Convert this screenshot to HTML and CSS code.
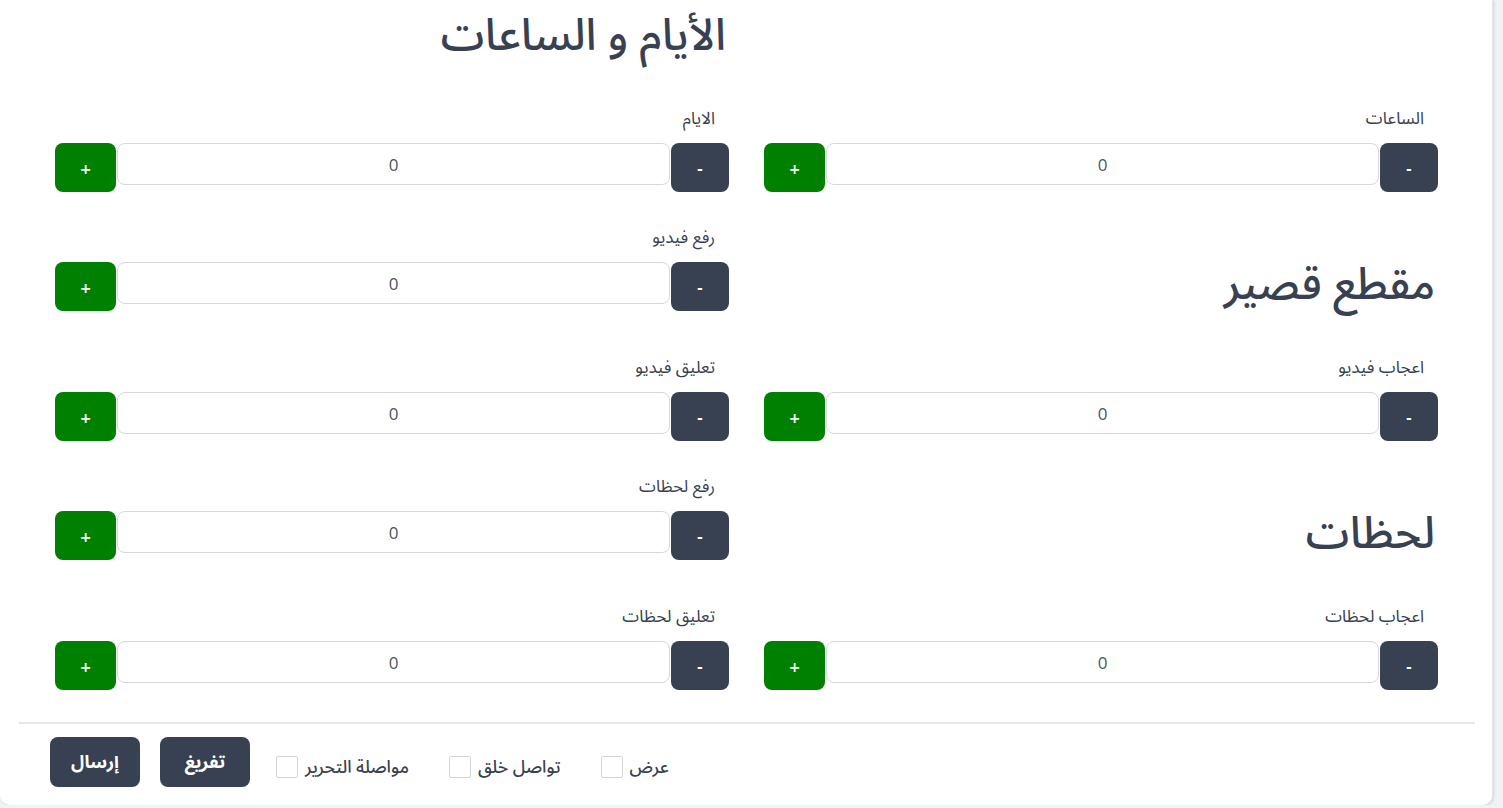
FILE: index.html
```html
<!DOCTYPE html>
<html lang="ar" dir="rtl">
<head>
<meta charset="utf-8">
<title>الأيام و الساعات</title>
<link rel="stylesheet" href="styles.css">
</head>
<body>
<div class="card">
  <div class="grid">
    <div class="cell"></div>
    <div class="cell"><h2 class="title title-top">الأيام و الساعات</h2></div>

    <div class="cell field">
      <label class="label">الساعات</label>
      <div class="group"><button class="btn minus">-</button><input class="num" value="0"><button class="btn plus">+</button></div>
    </div>
    <div class="cell field">
      <label class="label">الايام</label>
      <div class="group"><button class="btn minus">-</button><input class="num" value="0"><button class="btn plus">+</button></div>
    </div>

    <div class="cell"><h2 class="title title-mid">مقطع قصير</h2></div>
    <div class="cell field">
      <label class="label">رفع فيديو</label>
      <div class="group"><button class="btn minus">-</button><input class="num" value="0"><button class="btn plus">+</button></div>
    </div>

    <div class="cell field">
      <label class="label">اعجاب فيديو</label>
      <div class="group"><button class="btn minus">-</button><input class="num" value="0"><button class="btn plus">+</button></div>
    </div>
    <div class="cell field">
      <label class="label">تعليق فيديو</label>
      <div class="group"><button class="btn minus">-</button><input class="num" value="0"><button class="btn plus">+</button></div>
    </div>

    <div class="cell"><h2 class="title title-mid">لحظات</h2></div>
    <div class="cell field">
      <label class="label">رفع لحظات</label>
      <div class="group"><button class="btn minus">-</button><input class="num" value="0"><button class="btn plus">+</button></div>
    </div>

    <div class="cell field">
      <label class="label">اعجاب لحظات</label>
      <div class="group"><button class="btn minus">-</button><input class="num" value="0"><button class="btn plus">+</button></div>
    </div>
    <div class="cell field">
      <label class="label">تعليق لحظات</label>
      <div class="group"><button class="btn minus">-</button><input class="num" value="0"><button class="btn plus">+</button></div>
    </div>
  </div>

  <hr class="divider">

  <div class="footer">
    <label class="check"><span>عرض</span><span class="box"></span></label>
    <label class="check"><span>تواصل خلق</span><span class="box"></span></label>
    <label class="check"><span>مواصلة التحرير</span><span class="box"></span></label>
    <div class="actions">
      <button class="action">تفريغ</button>
      <button class="action">إرسال</button>
    </div>
  </div>
</div>
</body>
</html>
```

FILE: styles.css
```css
* { box-sizing: border-box; }
html, body { margin: 0; padding: 0; }
body {
  background: #f1f2f5;
  font-family: "Noto Sans Arabic", "DejaVu Sans", "Noto Sans", sans-serif;
  color: #374151;
}
.card {
  width: 1493px;
  height: 805px;
  margin: 0 10px 0 0;
  background: #fff;
  border-radius: 0 0 10px 10px;
  box-shadow: 1px 1px 3px rgba(0,0,0,0.12);
  border-right: 1px solid #e4e5ea;
  padding-top: 7px;
}
.grid {
  display: grid;
  grid-template-columns: 1fr 1fr;
  column-gap: 35px;
  row-gap: 34px;
  padding: 0 54px 0 55px;
}
.title {
  margin: 0;
  font-weight: 500;
  font-size: 44px;
  color: #374151;
  line-height: 66px;
  padding-right: 3px;
}
.title-top {
  margin-top: -4px;
  margin-bottom: 4px;
}
.title-mid {
  margin-top: 26px;
  margin-bottom: 4px;
}
.field { display: flex; flex-direction: column; }
.label {
  display: block;
  font-size: 17px;
  font-weight: 400;
  line-height: 24px;
  padding-right: 14px;
  margin-bottom: 12px;
  color: #374151;
}
.group {
  display: flex;
  align-items: flex-start;
  height: 49px;
}
.btn {
  border: 0;
  color: #fff;
  font-family: "DejaVu Sans", sans-serif;
  font-weight: bold;
  font-size: 14px;
  height: 49px;
  border-radius: 8px;
  padding: 0;
  padding-top: 3px;
}
.minus { width: 58px; background: #374151; }
.plus { width: 61px; background: #008000; }
.num {
  flex: 1;
  min-width: 0;
  height: 42px;
  border: 1px solid #d6d7de;
  border-radius: 8px;
  text-align: center;
  font-family: "Open Sans", "DejaVu Sans", sans-serif;
  font-size: 17px;
  color: #4b5563;
  background: #fff;
  margin: 0 1px;
}
.divider {
  margin: 32px 17px 0 19px;
  border: 0;
  border-top: 2px solid #e5e7eb;
}
.footer {
  display: flex;
  justify-content: flex-end;
  align-items: center;
  gap: 40px;
  padding: 13px 0 0 50px;
}
.check {
  display: flex;
  align-items: center;
  gap: 7px;
  font-size: 17.5px;
  font-weight: 500;
  color: #374151;
  margin-top: 10px;
}
.box {
  width: 22px;
  height: 22px;
  border: 1px solid #d4d5db;
  border-radius: 2px;
  background: #fff;
}
.actions {
  display: flex;
  gap: 20px;
  margin-right: -14px;
}
.action {
  border: 0;
  background: #374151;
  color: #fff;
  font-family: "Noto Sans Arabic", "DejaVu Sans", sans-serif;
  font-weight: bold;
  font-size: 18px;
  height: 50px;
  width: 90px;
  border-radius: 8px;
}
```
